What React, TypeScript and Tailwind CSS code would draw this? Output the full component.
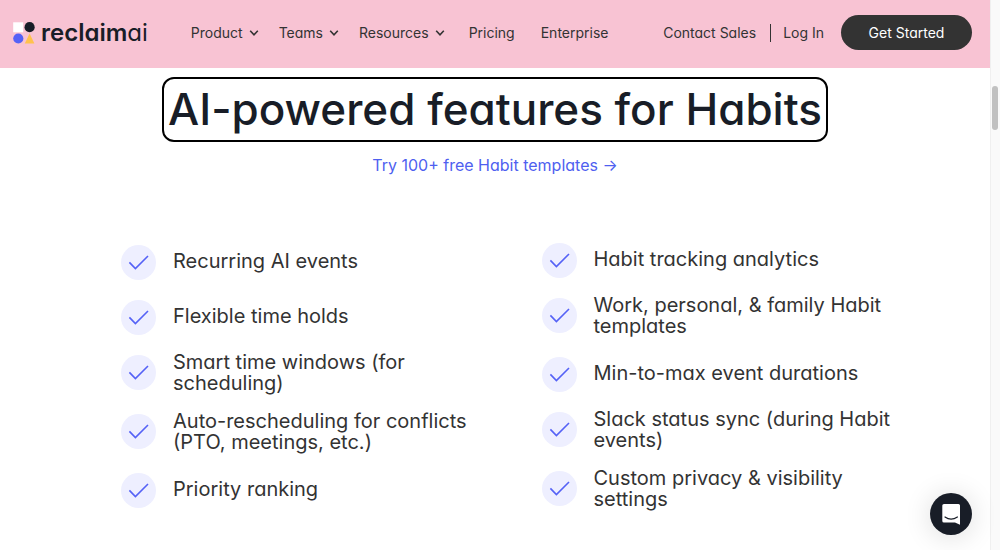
import React from "react";

const menus = ["Product", "Teams", "Resources"];

const leftFeatures = [
  "Recurring AI events",
  "Flexible time holds",
  "Smart time windows (for scheduling)",
  "Auto-rescheduling for conflicts (PTO, meetings, etc.)",
  "Priority ranking",
];

const rightFeatures = [
  "Habit tracking analytics",
  "Work, personal, & family Habit templates",
  "Min-to-max event durations",
  "Slack status sync (during Habit events)",
  "Custom privacy & visibility settings",
];

function Chevron() {
  return (
    <svg viewBox="0 0 10 8" className="mt-px h-2 w-2.5" fill="none" stroke="currentColor" strokeWidth="1.6" aria-hidden="true">
      <path d="M1.2 1.8 5 5.8 8.8 1.8" />
    </svg>
  );
}

function Logo() {
  return (
    <a href="#home" className="flex items-center gap-1.5 text-[#181d27]" aria-label="reclaimai">
      <svg viewBox="0 0 22 22" className="h-[22px] w-[22px]" aria-hidden="true">
        <rect x="0.2" y="0.3" width="10" height="10" fill="#fff" />
        <circle cx="16.6" cy="5.2" r="5.1" fill="#181d27" />
        <circle cx="5.3" cy="16.5" r="5.1" fill="#5562f6" />
        <path d="M16.6 11.6 21.4 21.4H11.8Z" fill="#ffc24d" />
      </svg>
      <span className="text-[24px] leading-8 font-semibold">
        reclaim<span className="font-normal">ai</span>
      </span>
    </a>
  );
}

function FeatureList({ items }: { items: string[] }) {
  return (
    <ul className="flex flex-col gap-[17px]">
      {items.map((item) => (
        <li key={item} className="flex min-h-[38px] items-start gap-[17px]">
          <svg viewBox="0 0 35 35" className="mt-[3px] h-[35px] w-[35px] shrink-0" fill="none" aria-hidden="true">
            <circle cx="17.5" cy="17.5" r="17.5" fill="#eeefff" />
            <path d="M8.4 17.4 14.4 23.6 27 11" stroke="#5562f6" strokeWidth="1.6" />
          </svg>
          <span className="self-center text-[20px] leading-[21px] text-[#333]">{item}</span>
        </li>
      ))}
    </ul>
  );
}

export default function App() {
  return (
    <div className="flex min-h-screen bg-white font-[Inter,sans-serif] [font-feature-settings:'cv11']">
      <div className="min-w-0 flex-1">
        <header className="flex h-[68px] items-center bg-[#f8c3d3] pr-[18px] pb-[3px] pl-[13px] text-[14px] text-[#333]">
          <Logo />
          <nav className="ml-[43px] flex items-center">
            <div className="flex gap-5">
              {menus.map((label) => (
                <button key={label} type="button" className="flex items-center gap-1.5">
                  {label}
                  <Chevron />
                </button>
              ))}
            </div>
            <a href="#pricing" className="ml-6">Pricing</a>
            <a href="#enterprise" className="ml-[26px]">Enterprise</a>
          </nav>
          <div className="ml-auto flex items-center">
            <a href="#sales">Contact Sales</a>
            <span className="mr-3 ml-3.5 h-[18px] w-px bg-[#333]" />
            <a href="#login">Log In</a>
            <a href="#start" className="ml-[17px] flex h-[35px] w-[131px] items-center justify-center rounded-full bg-[#333] text-white">
              Get Started
            </a>
          </div>
        </header>

        <main className="flex flex-col items-center pt-[9px]">
          <h1 className="rounded-xl border-2 border-black px-1 text-[44px] leading-[61px] font-medium text-[#181d27]">
            AI-powered features for Habits
          </h1>
          <a href="#templates" className="mt-[11px] text-[16px] leading-6 text-[#4f5ff0]">
            Try 100+ free Habit templates →
          </a>
          <section className="mt-[63px] grid w-full grid-cols-2 items-center gap-x-[60px] pr-[88px] pl-[121px]">
            <FeatureList items={leftFeatures} />
            <FeatureList items={rightFeatures} />
          </section>
        </main>
      </div>

      <div className="w-2.5 shrink-0 border-l border-[#f0f0f0] bg-[#fafafa] pt-[86px]" aria-hidden="true">
        <div className="ml-px h-11 w-1.5 rounded-full bg-[#c1c1c1]" />
      </div>

      <button
        type="button"
        aria-label="Open chat"
        className="fixed right-7 bottom-[15px] flex h-[42px] w-[42px] items-center justify-center rounded-full bg-[#181d27] shadow-[0_2px_28px_rgba(0,0,0,0.14)]"
      >
        <svg viewBox="0 0 20 22" className="h-[22px] w-5" fill="none" aria-hidden="true">
          <path d="M3 1H17.500Q19 1 19 2.500V21.800L14 19.500H3Q1.300 19.500 1.300 18V2.500Q1.300 1 3 1Z" fill="#fff" />
          <path d="M4 14Q10 18.300 16.400 14" stroke="#181d27" strokeWidth="1.2" strokeLinecap="round" />
        </svg>
      </button>
    </div>
  );
}
